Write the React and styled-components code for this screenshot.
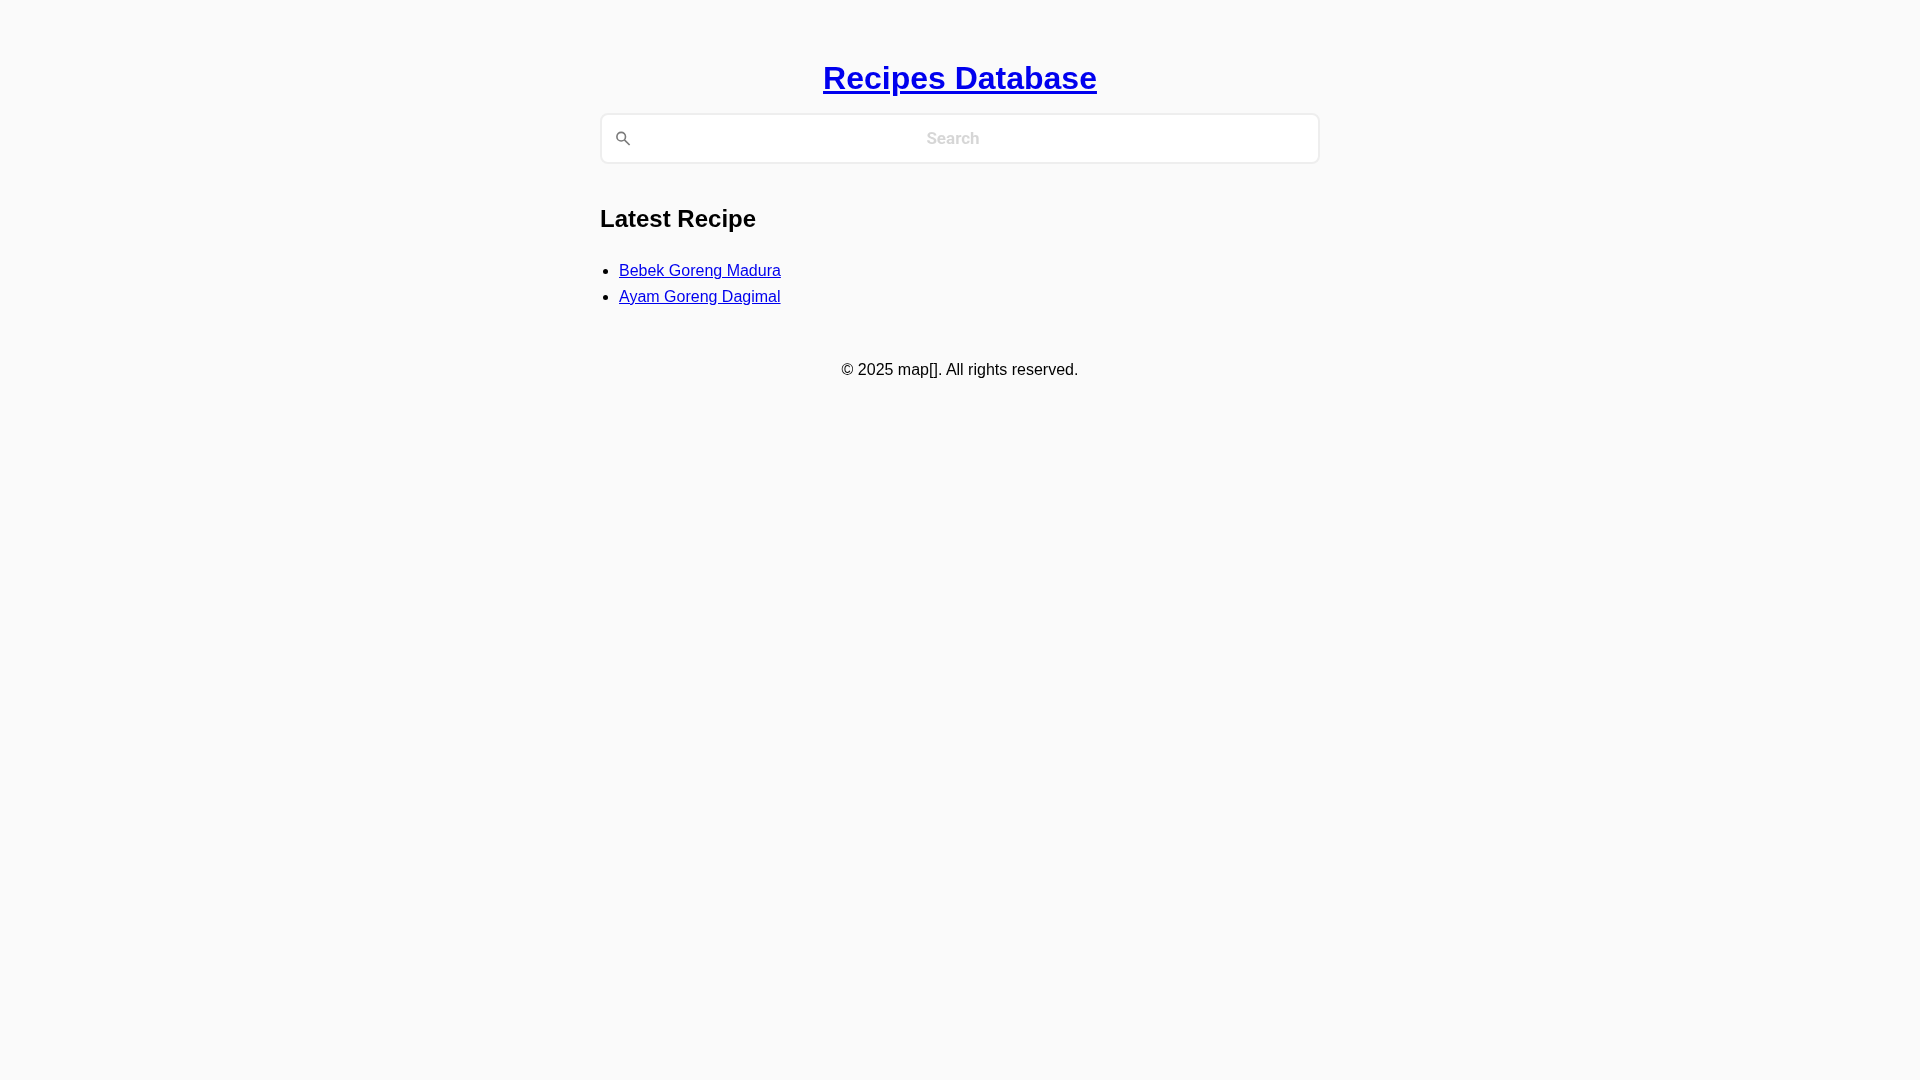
import React from "react";
import styled, { createGlobalStyle } from "styled-components";

const GlobalStyle = createGlobalStyle`
  body {
    margin: 0;
    background-color: #fafafa;
    color: #000;
    font-family: "Liberation Sans", Arial, sans-serif;
    font-size: 16px;
    line-height: 1.6;
  }
`;

const Page = styled.div`
  width: 720px;
  margin: 0 auto;
  padding-top: 48px;
  will-change: opacity;
`;

const SiteHeader = styled.header`
  text-align: center;
`;

const Title = styled.h1`
  margin: 0 0 5px;
  font-size: 32px;
  line-height: 60px;
  font-weight: 700;

  a {
    color: #0000ee;
  }
`;

const SearchBox = styled.div`
  position: relative;
  height: 51px;
`;

const SearchInput = styled.input`
  box-sizing: border-box;
  width: 100%;
  height: 100%;
  padding: 0 70px 2px 56px;
  background-color: #fff;
  border: 2px solid #eeeeee;
  border-radius: 8px;
  outline: none;
  font-family: Roboto, sans-serif;
  font-size: 17px;
  font-weight: 700;
  text-align: center;
  color: #393939;

  &::placeholder {
    color: #393939;
    opacity: 0.2;
  }
`;

const SearchIcon = styled.svg`
  position: absolute;
  left: 15px;
  top: 18px;
  width: 16px;
  height: 16px;
`;

const Section = styled.section`
  margin-top: 36px;
`;

const SectionTitle = styled.h2`
  margin: 0 0 20px;
  font-size: 24px;
  line-height: 38px;
  font-weight: 700;
`;

const RecipeList = styled.ul`
  margin: 0;
  padding-left: 19px;

  a {
    color: #0000ee;
  }
`;

const Footer = styled.footer`
  margin-top: 48px;
  text-align: center;
`;

const recipes = ["Bebek Goreng Madura", "Ayam Goreng Dagimal"];

export default function App() {
  return (
    <>
      <GlobalStyle />
      <Page>
        <SiteHeader>
          <Title>
            <a href="#">Recipes Database</a>
          </Title>
          <SearchBox>
            <SearchIcon viewBox="0 0 16 16" fill="none" stroke="#7a7a7a" strokeWidth="1.6">
              <circle cx="6.2" cy="5.7" r="4.3" />
              <path d="M9.4 8.9 L14.6 14" />
            </SearchIcon>
            <SearchInput placeholder="Search" />
          </SearchBox>
        </SiteHeader>
        <Section>
          <SectionTitle>Latest Recipe</SectionTitle>
          <RecipeList>
            {recipes.map((name) => (
              <li key={name}>
                <a href="#">{name}</a>
              </li>
            ))}
          </RecipeList>
        </Section>
        <Footer>© 2025 map[]. All rights reserved.</Footer>
      </Page>
    </>
  );
}
